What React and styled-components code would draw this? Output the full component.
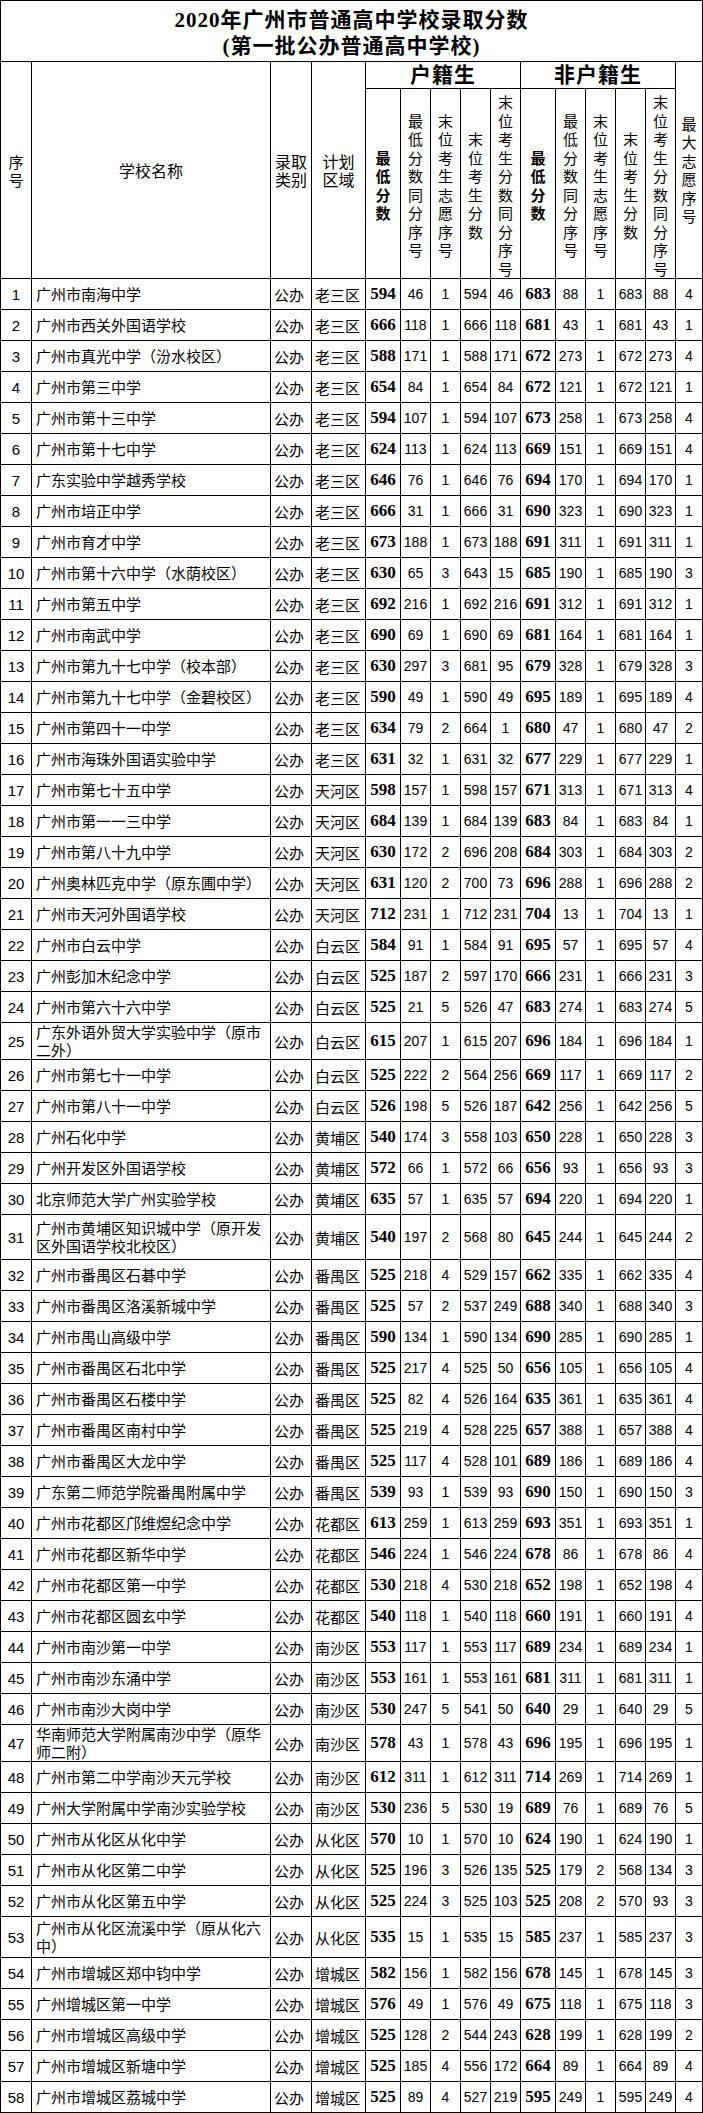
import React from 'react';
import styled, { createGlobalStyle } from 'styled-components';

const GlobalStyle = createGlobalStyle`
  html, body { margin: 0; padding: 0; background: #fff; }
  body { font-family: "Noto Sans CJK SC", sans-serif; color: #000; }
  *, *::before, *::after { box-sizing: border-box; }
`;

const COLS = '31px 239px 41px 54px 35px 30px 30px 30px 30px 35px 30px 30px 30px 30px 27px';

const Sheet = styled.div`
  width: 703px;
  border-top: 1px solid #000;
  border-left: 1px solid #000;
  display: flex;
  flex-direction: column;
`;

const TitleBar = styled.div`
  height: 61px;
  border-right: 1px solid #000;
  border-bottom: 1px solid #000;
  display: flex;
  flex-direction: column;
  align-items: center;
  justify-content: center;
  padding-top: 3px;
  font-family: "Liberation Serif", "Noto Sans CJK SC", serif;
  font-weight: 700;
  font-size: 21px;
  letter-spacing: 1px;
  line-height: 26px;
`;

const HeaderGrid = styled.div`
  display: grid;
  grid-template-columns: ${COLS};
  grid-template-rows: 27px 190px;
`;

const Cell = styled.div`
  border-right: 1px solid #000;
  border-bottom: 1px solid #000;
  display: flex;
  align-items: center;
  justify-content: center;
  min-width: 0;
`;

const HeadCell = styled(Cell)`
  grid-column: ${(p) => p.$col};
  grid-row: ${(p) => p.$row};
  font-size: 16px;
  line-height: 18.5px;
  text-align: center;
`;

const GroupTitle = styled(HeadCell)`
  font-family: "Liberation Serif", "Noto Sans CJK SC", serif;
  font-weight: 700;
  font-size: 21px;
  letter-spacing: 1px;
  line-height: 26px;
`;

const VText = styled.div`
  width: 1em;
  font-size: 15px;
  line-height: 18.5px;
  font-weight: ${(p) => (p.$bold ? 700 : 400)};
  text-align: center;
  word-break: break-all;
  margin-top: ${(p) => p.$shift || 0}px;
`;

const TwoLine = styled.div`
  width: 2em;
  font-size: 16px;
  line-height: 18.5px;
  word-break: break-all;
`;

const DataRow = styled.div`
  display: grid;
  grid-template-columns: ${COLS};
  height: ${(p) => p.$h}px;
`;

const SeqCell = styled(Cell)`
  font-family: "Liberation Sans", sans-serif;
  font-size: 15px;
`;

const NameCell = styled(Cell)`
  justify-content: flex-start;
  padding: 0 2px 0 4px;
  font-size: 15px;
  line-height: 18px;
`;

const TextCell = styled(Cell)`
  justify-content: flex-start;
  padding-left: 3px;
  font-size: 15px;
  white-space: nowrap;
`;

const NumCell = styled(Cell)`
  font-family: ${(p) => (p.$bold ? '"Liberation Serif", serif' : '"Liberation Sans", sans-serif')};
  font-weight: ${(p) => (p.$bold ? 700 : 400)};
  font-size: ${(p) => (p.$bold ? 17 : 14)}px;
  white-space: nowrap;
`;

const RAW = `广州市南海中学|老三区|594 46 1 594 46 683 88 1 683 88 4
广州市西关外国语学校|老三区|666 118 1 666 118 681 43 1 681 43 1
广州市真光中学（汾水校区）|老三区|588 171 1 588 171 672 273 1 672 273 4
广州市第三中学|老三区|654 84 1 654 84 672 121 1 672 121 1
广州市第十三中学|老三区|594 107 1 594 107 673 258 1 673 258 4
广州市第十七中学|老三区|624 113 1 624 113 669 151 1 669 151 4
广东实验中学越秀学校|老三区|646 76 1 646 76 694 170 1 694 170 1
广州市培正中学|老三区|666 31 1 666 31 690 323 1 690 323 1
广州市育才中学|老三区|673 188 1 673 188 691 311 1 691 311 1
广州市第十六中学（水荫校区）|老三区|630 65 3 643 15 685 190 1 685 190 3
广州市第五中学|老三区|692 216 1 692 216 691 312 1 691 312 1
广州市南武中学|老三区|690 69 1 690 69 681 164 1 681 164 1
广州市第九十七中学（校本部）|老三区|630 297 3 681 95 679 328 1 679 328 3
广州市第九十七中学（金碧校区）|老三区|590 49 1 590 49 695 189 1 695 189 4
广州市第四十一中学|老三区|634 79 2 664 1 680 47 1 680 47 2
广州市海珠外国语实验中学|老三区|631 32 1 631 32 677 229 1 677 229 1
广州市第七十五中学|天河区|598 157 1 598 157 671 313 1 671 313 4
广州市第一一三中学|天河区|684 139 1 684 139 683 84 1 683 84 1
广州市第八十九中学|天河区|630 172 2 696 208 684 303 1 684 303 2
广州奥林匹克中学（原东圃中学）|天河区|631 120 2 700 73 696 288 1 696 288 2
广州市天河外国语学校|天河区|712 231 1 712 231 704 13 1 704 13 1
广州市白云中学|白云区|584 91 1 584 91 695 57 1 695 57 4
广州彭加木纪念中学|白云区|525 187 2 597 170 666 231 1 666 231 3
广州市第六十六中学|白云区|525 21 5 526 47 683 274 1 683 274 5
广东外语外贸大学实验中学（原市二外）|白云区|615 207 1 615 207 696 184 1 696 184 1
广州市第七十一中学|白云区|525 222 2 564 256 669 117 1 669 117 2
广州市第八十一中学|白云区|526 198 5 526 187 642 256 1 642 256 5
广州石化中学|黄埔区|540 174 3 558 103 650 228 1 650 228 3
广州开发区外国语学校|黄埔区|572 66 1 572 66 656 93 1 656 93 3
北京师范大学广州实验学校|黄埔区|635 57 1 635 57 694 220 1 694 220 1
广州市黄埔区知识城中学（原开发区外国语学校北校区）|黄埔区|540 197 2 568 80 645 244 1 645 244 2
广州市番禺区石碁中学|番禺区|525 218 4 529 157 662 335 1 662 335 4
广州市番禺区洛溪新城中学|番禺区|525 57 2 537 249 688 340 1 688 340 3
广州市禺山高级中学|番禺区|590 134 1 590 134 690 285 1 690 285 1
广州市番禺区石北中学|番禺区|525 217 4 525 50 656 105 1 656 105 4
广州市番禺区石楼中学|番禺区|525 82 4 526 164 635 361 1 635 361 4
广州市番禺区南村中学|番禺区|525 219 4 528 225 657 388 1 657 388 4
广州市番禺区大龙中学|番禺区|525 117 4 528 101 689 186 1 689 186 4
广东第二师范学院番禺附属中学|番禺区|539 93 1 539 93 690 150 1 690 150 3
广州市花都区邝维煜纪念中学|花都区|613 259 1 613 259 693 351 1 693 351 1
广州市花都区新华中学|花都区|546 224 1 546 224 678 86 1 678 86 4
广州市花都区第一中学|花都区|530 218 4 530 218 652 198 1 652 198 4
广州市花都区圆玄中学|花都区|540 118 1 540 118 660 191 1 660 191 4
广州市南沙第一中学|南沙区|553 117 1 553 117 689 234 1 689 234 1
广州市南沙东涌中学|南沙区|553 161 1 553 161 681 311 1 681 311 1
广州市南沙大岗中学|南沙区|530 247 5 541 50 640 29 1 640 29 5
华南师范大学附属南沙中学（原华师二附）|南沙区|578 43 1 578 43 696 195 1 696 195 1
广州市第二中学南沙天元学校|南沙区|612 311 1 612 311 714 269 1 714 269 1
广州大学附属中学南沙实验学校|南沙区|530 236 5 530 19 689 76 1 689 76 5
广州市从化区从化中学|从化区|570 10 1 570 10 624 190 1 624 190 1
广州市从化区第二中学|从化区|525 196 3 526 135 525 179 2 568 134 3
广州市从化区第五中学|从化区|525 224 3 525 103 525 208 2 570 93 3
广州市从化区流溪中学（原从化六中）|从化区|535 15 1 535 15 585 237 1 585 237 3
广州市增城区郑中钧中学|增城区|582 156 1 582 156 678 145 1 678 145 3
广州增城区第一中学|增城区|576 49 1 576 49 675 118 1 675 118 3
广州市增城区高级中学|增城区|525 128 2 544 243 628 199 1 628 199 2
广州市增城区新塘中学|增城区|525 185 4 556 172 664 89 1 664 89 4
广州市增城区荔城中学|增城区|525 89 4 527 219 595 249 1 595 249 4`;

const ROW_HEIGHTS = { 25: 37, 31: 45, 47: 37, 53: 41 };

const rows = RAW.split('\n').map((line, i) => {
  const [name, area, nums] = line.split('|');
  return { seq: i + 1, name, area, nums: nums.split(' ') };
});

const SUB_HEADERS = [
  { text: '最低分数', bold: true },
  { text: '最低分数同分序号' },
  { text: '末位考生志愿序号' },
  { text: '末位考生分数' },
  { text: '末位考生分数同分序号' },
];

export default function App() {
  return (
    <>
      <GlobalStyle />
      <Sheet>
        <TitleBar>
          <div>2020年广州市普通高中学校录取分数</div>
          <div>(第一批公办普通高中学校)</div>
        </TitleBar>
        <HeaderGrid>
          <HeadCell $col="1" $row="1 / 3"><VText $shift={2}>序号</VText></HeadCell>
          <HeadCell $col="2" $row="1 / 3">学校名称</HeadCell>
          <HeadCell $col="3" $row="1 / 3"><TwoLine>录取类别</TwoLine></HeadCell>
          <HeadCell $col="4" $row="1 / 3"><TwoLine>计划区域</TwoLine></HeadCell>
          <GroupTitle $col="5 / 10" $row="1">户籍生</GroupTitle>
          <GroupTitle $col="10 / 15" $row="1">非户籍生</GroupTitle>
          <HeadCell $col="15" $row="1 / 3"><VText>最大志愿序号</VText></HeadCell>
          {[0, 1].map((g) =>
            SUB_HEADERS.map((h, j) => (
              <HeadCell key={`${g}-${j}`} $col={`${5 + g * 5 + j}`} $row="2">
                <VText $bold={h.bold} $shift={4}>{h.text}</VText>
              </HeadCell>
            ))
          )}
        </HeaderGrid>
        {rows.map((r) => (
          <DataRow key={r.seq} $h={ROW_HEIGHTS[r.seq] || 31}>
            <SeqCell>{r.seq}</SeqCell>
            <NameCell>{r.name}</NameCell>
            <TextCell>公办</TextCell>
            <TextCell>{r.area}</TextCell>
            {r.nums.map((n, k) => (
              <NumCell key={k} $bold={k === 0 || k === 5}>{n}</NumCell>
            ))}
          </DataRow>
        ))}
      </Sheet>
    </>
  );
}
